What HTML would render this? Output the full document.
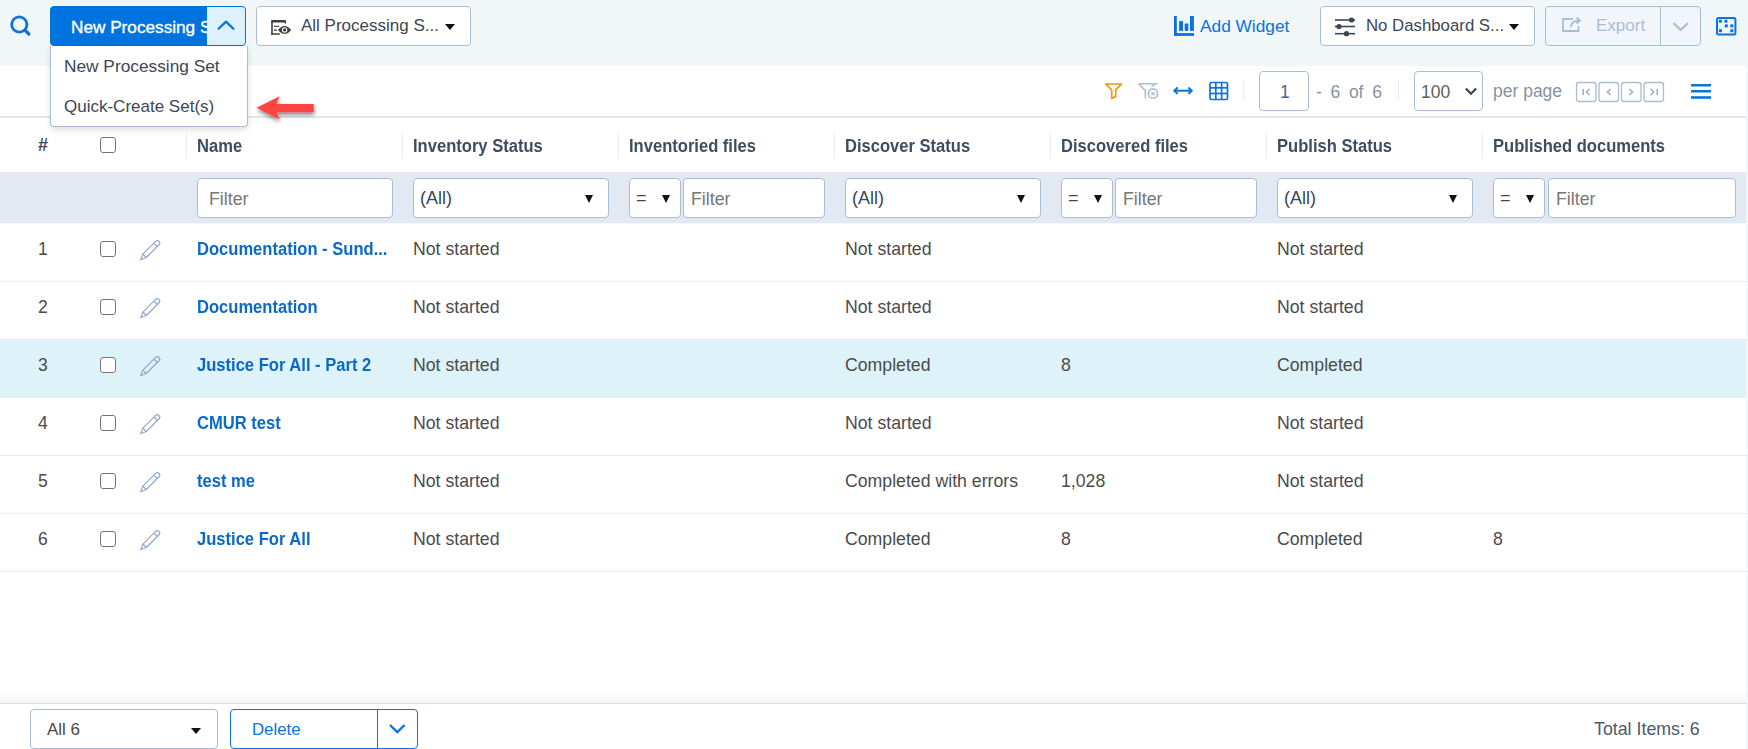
<!DOCTYPE html>
<html><head><meta charset="utf-8">
<style>
*{box-sizing:border-box;margin:0;padding:0}
html,body{width:1748px;height:749px;overflow:hidden;background:#fff;font-family:"Liberation Sans",sans-serif;color:#3d4654;position:relative}
div,span{position:absolute;white-space:nowrap}
svg{position:absolute;overflow:visible}
.t{font-size:17px;line-height:20px}
.b{border:1px solid #a9bdd6;border-radius:4px;background:#fff}
.hdr{font-weight:bold;font-size:18px;line-height:20px;color:#3e4d61;top:136px;transform:scaleX(0.92);transform-origin:0 0}
.sep{top:133px;width:1px;height:25px;background:#e6ecf2}
.inp{top:178px;height:40px;background:#fff;border:1px solid #a9bdd6;border-radius:4px}
.ph{font-size:17.8px;line-height:20px;color:#777;top:10px;left:11px}
.ph2{left:7px}
.sel{font-size:18px;line-height:20px;color:#3d4654;top:9px;left:8px}
.car{width:0;height:0;border-left:4.5px solid transparent;border-right:4.5px solid transparent;border-top:8px solid #111;top:16px}
.rb{left:0;width:1746px;height:1px;background:#e4ecf3}
.c{font-size:17.7px;line-height:20px;color:#4b4b4b}
.n{font-size:17.5px;line-height:20px;color:#4b4b4b;left:38px}
.cb{left:100px;width:16px;height:16px;border:1px solid #767676;border-radius:3px;background:#fff}
.lk{font-size:18px;font-weight:bold;line-height:20px;color:#0b6ac6;left:197px;transform:scaleX(0.92);transform-origin:0 0}
</style></head>
<body>
<!-- top bar -->
<div style="left:0;top:0;width:1748px;height:66px;background:#f1f6f9"></div>
<!-- search icon -->
<svg style="left:0;top:0" width="40" height="40"><circle cx="19.3" cy="24.5" r="7.6" fill="none" stroke="#0a73de" stroke-width="2.8"/><line x1="25" y1="30.2" x2="28.8" y2="34" stroke="#0a73de" stroke-width="3.2" stroke-linecap="round"/></svg>
<!-- New processing button -->
<div style="left:50px;top:6px;width:196px;height:40px;border-radius:4px;background:#0073de;overflow:hidden;border:1px solid #0073de">
  <div class="t" style="left:20px;top:10px;color:#fff;font-size:17.2px;-webkit-text-stroke:0.35px #fff">New Processing S</div>
  <div style="left:156px;top:0;width:39px;height:38px;background:#dcf1f9"></div>
</div>
<svg style="left:0;top:0" width="260" height="50"><polyline points="218.6,28.8 226,21.6 233.4,28.8" fill="none" stroke="#0a73de" stroke-width="2.3" stroke-linecap="round" stroke-linejoin="round"/></svg>
<!-- All processing sets -->
<div class="b" style="left:256px;top:6px;width:215px;height:40px">
  <div class="t" style="left:44px;top:9px;color:#3d4654">All Processing S...</div>
  <div class="car" style="left:188px;top:17px;border-top-color:#111;border-left-width:5px;border-right-width:5px;border-top-width:6px"></div>
</div>
<svg style="left:0;top:0" width="300" height="50"><g fill="#3f3f3f"><rect x="271.2" y="20" width="14.8" height="2.5" rx="0.9"/><rect x="284.6" y="21.5" width="1.4" height="2.1"/><rect x="271.2" y="20.6" width="1.6" height="14.2" rx="0.5"/><rect x="271.2" y="33.3" width="8.7" height="1.5" rx="0.5"/><rect x="274" y="25.8" width="5.2" height="1.1"/><rect x="274" y="29.5" width="2.8" height="1.3"/><path d="M278,29.9 Q284.6,22 291.2,29.9 Q284.6,37.8 278,29.9 Z"/></g><circle cx="284.6" cy="29.9" r="2.7" fill="#fff"/><circle cx="284.6" cy="29.9" r="1.6" fill="#3f3f3f"/></svg>
<!-- Add widget -->
<svg style="left:0;top:0" width="1200" height="50"><g fill="#0a73de"><rect x="1174" y="16" width="2.8" height="19.9"/><rect x="1174" y="33.1" width="20" height="2.8"/><rect x="1179.1" y="21.1" width="3.9" height="9.8"/><rect x="1184.7" y="23.5" width="3.6" height="7.4" rx="0.8"/><rect x="1190" y="16" width="3.9" height="14.9"/></g></svg>
<div class="t" style="left:1200px;top:16px;color:#0a73de;font-size:17.3px">Add Widget</div>
<!-- No dashboard -->
<div class="b" style="left:1320px;top:6px;width:215px;height:40px">
  <div class="t" style="left:45px;top:9px;color:#3d4654;font-size:16.8px">No Dashboard S...</div>
  <div class="car" style="left:188px;top:17px;border-top-color:#111;border-left-width:5px;border-right-width:5px;border-top-width:6px"></div>
</div>
<svg style="left:0;top:0" width="1400" height="50"><g stroke="#3d4654" stroke-width="1.6"><line x1="1335" y1="20" x2="1355" y2="20"/><line x1="1335" y1="26.5" x2="1355" y2="26.5"/><line x1="1335" y1="33.7" x2="1355" y2="33.7"/></g><g fill="#3d4654"><circle cx="1351.5" cy="20" r="2.6"/><circle cx="1339" cy="26.5" r="2.6"/><circle cx="1346.5" cy="33.7" r="2.6"/></g></svg>
<!-- Export -->
<div style="left:1545px;top:6px;width:156px;height:40px;border:1px solid #a9bdd6;border-radius:4px;background:#f2f6fa">
  <div style="left:114px;top:0;width:1px;height:38px;background:#a9bdd6"></div>
  <div class="t" style="left:50px;top:9px;color:#a9bdd6">Export</div>
</div>
<svg style="left:0;top:0" width="1748" height="50"><g fill="none" stroke="#a9bdd6" stroke-width="1.8"><path d="M1573,19 H1563 V31 H1578.5 V26"/><path d="M1571,27 Q1571,21 1579,20.5"/><path d="M1576.5,17.5 L1580,20.5 L1576.5,23.5"/></g><polyline points="1673.5,23 1680.7,30 1688,23" fill="none" stroke="#a9bdd6" stroke-width="2.2"/>
<g><rect x="1717" y="18" width="18.4" height="16.4" rx="1.5" fill="none" stroke="#0a73de" stroke-width="2"/><g fill="#0a73de"><rect x="1718.9" y="19.7" width="3" height="3"/><rect x="1724.4" y="19.7" width="3" height="3"/><rect x="1724.8" y="24.4" width="3" height="3"/><rect x="1730.3" y="24.4" width="3" height="3"/><rect x="1718.9" y="29.2" width="3" height="3"/><rect x="1730.3" y="29.2" width="3" height="3"/></g></g></svg>

<!-- toolbar 2 -->
<div style="left:0;top:116px;width:1746px;height:2px;background:#dfe7f0"></div>
<div style="left:1746px;top:66px;width:2px;height:683px;background:#f1f6f9"></div>
<svg style="left:0;top:0" width="1748" height="120">
<path d="M1105.6,84 H1121.4 L1115.7,89.8 V96.4 L1111.7,98.4 V89.8 Z" fill="none" stroke="#f5920f" stroke-width="1.7" stroke-linejoin="round"/>
<g fill="none" stroke="#adc0d9" stroke-width="1.6"><path d="M1138.6,83.7 H1156 L1151.3,86.6"/><path d="M1138.6,83.7 L1145.3,90.6 V98.4"/><rect x="1148.6" y="89.2" width="8.8" height="8.8" rx="3.6" stroke-width="1.7"/></g><path d="M1151.4,92.2 L1154.7,95.4 M1154.7,92.2 L1151.4,95.4" stroke="#adc0d9" stroke-width="1.3"/>
<g fill="none" stroke="#0a73de" stroke-width="2"><line x1="1175" y1="90.7" x2="1191" y2="90.7"/><polyline points="1177.6,87.5 1174.3,90.7 1177.6,93.9"/><polyline points="1188.4,87.5 1191.7,90.7 1188.4,93.9"/></g>
<g fill="none" stroke="#0a73de" stroke-width="1.7"><rect x="1210" y="82.5" width="17.5" height="17" rx="1.5"/><line x1="1215.8" y1="82.5" x2="1215.8" y2="99.5"/><line x1="1221.6" y1="82.5" x2="1221.6" y2="99.5"/><line x1="1210" y1="87.8" x2="1227.5" y2="87.8"/><line x1="1210" y1="93.5" x2="1227.5" y2="93.5"/></g>
<line x1="1243.5" y1="80" x2="1243.5" y2="100.5" stroke="#e6ecf2" stroke-width="1"/>
<line x1="1398.5" y1="80" x2="1398.5" y2="100.5" stroke="#e6ecf2" stroke-width="1"/>
<polyline points="1465.8,88.5 1471,93.7 1476.2,88.5" fill="none" stroke="#3a4350" stroke-width="2.2"/>
<g fill="none" stroke="#a9bdd6" stroke-width="1.3"><rect x="1576.5" y="82.5" width="19.5" height="19" rx="2.5"/><rect x="1599" y="82.5" width="19.5" height="19" rx="2.5"/><rect x="1621.5" y="82.5" width="19.5" height="19" rx="2.5"/><rect x="1644" y="82.5" width="19.5" height="19" rx="2.5"/></g>
<g fill="none" stroke="#98aac4" stroke-width="1.4"><line x1="1583.3" y1="88.8" x2="1583.3" y2="95"/><polyline points="1589.6,88.8 1586.4,91.9 1589.6,95"/><polyline points="1610.6,88.8 1607.4,91.9 1610.6,95"/><polyline points="1629.4,88.8 1632.6,91.9 1629.4,95"/><polyline points="1650.6,88.8 1653.8,91.9 1650.6,95"/><line x1="1657.2" y1="88.8" x2="1657.2" y2="95"/></g>
<g fill="#0a73de"><rect x="1691" y="84" width="20" height="2.5"/><rect x="1691" y="90" width="20" height="2.5"/><rect x="1691" y="96.2" width="20" height="2.6"/></g>
</svg>
<div style="left:1259px;top:71px;width:50px;height:40px;border:1px solid #a9bdd6;border-radius:4px"></div>
<div class="t" style="left:1280px;top:82px;color:#4a6294;font-size:17.5px">1</div>
<div class="t" style="left:1316px;top:82px;color:#8792a5;font-size:17.5px;word-spacing:3.8px">- 6 of 6</div>
<div style="left:1414px;top:71px;width:69px;height:40px;border:1px solid #a9bdd6;border-radius:4px"></div>
<div class="t" style="left:1421px;top:82px;color:#606060;font-size:17.5px">100</div>
<div class="t" style="left:1493px;top:81px;color:#8792a5;font-size:17.5px">per page</div>

<!-- header -->
<div class="hdr" style="left:38px;font-size:18px;transform:none;top:135px">#</div>
<div class="cb" style="top:137px"></div>
<div class="sep" style="left:186px"></div>
<div class="hdr" style="left:197px">Name</div>
<div class="sep" style="left:402px"></div>
<div class="hdr" style="left:413px">Inventory Status</div>
<div class="sep" style="left:618px"></div>
<div class="hdr" style="left:629px">Inventoried files</div>
<div class="sep" style="left:834px"></div>
<div class="hdr" style="left:845px">Discover Status</div>
<div class="sep" style="left:1050px"></div>
<div class="hdr" style="left:1061px">Discovered files</div>
<div class="sep" style="left:1266px"></div>
<div class="hdr" style="left:1277px">Publish Status</div>
<div class="sep" style="left:1482px"></div>
<div class="hdr" style="left:1493px">Published documents</div>

<!-- filter row -->
<div style="left:0;top:172px;width:1746px;height:51px;background:#e2e9f3"></div><div style="left:0;top:223px;width:1746px;height:1px;background:#f3f6fa"></div>
<div class="inp" style="left:197px;width:196px"><div class="ph">Filter</div></div>
<div class="inp" style="left:413px;width:196px"><div class="sel" style="left:6px">(All)</div><div class="car" style="left:171px"></div></div>
<div class="inp" style="left:629px;width:52px"><div class="sel" style="left:6px">=</div><div class="car" style="left:32px"></div></div>
<div class="inp" style="left:683px;width:142px"><div class="ph ph2">Filter</div></div>
<div class="inp" style="left:845px;width:196px"><div class="sel" style="left:6px">(All)</div><div class="car" style="left:171px"></div></div>
<div class="inp" style="left:1061px;width:52px"><div class="sel" style="left:6px">=</div><div class="car" style="left:32px"></div></div>
<div class="inp" style="left:1115px;width:142px"><div class="ph ph2">Filter</div></div>
<div class="inp" style="left:1277px;width:196px"><div class="sel" style="left:6px">(All)</div><div class="car" style="left:171px"></div></div>
<div class="inp" style="left:1493px;width:52px"><div class="sel" style="left:6px">=</div><div class="car" style="left:32px"></div></div>
<div class="inp" style="left:1548px;width:188px"><div class="ph ph2">Filter</div></div>

<!-- rows -->
<div style="left:0;top:339px;width:1746px;height:58px;background:#ddf2f9"></div>
<div class="rb" style="top:281px"></div>
<div class="rb" style="top:339px"></div>
<div class="rb" style="top:397px"></div>
<div class="rb" style="top:455px"></div>
<div class="rb" style="top:513px"></div>
<div class="rb" style="top:571px"></div>

<div class="n" style="top:239px">1</div><div class="cb" style="top:241px"></div>
<div class="lk" style="top:239px">Documentation - Sund...</div>
<div class="c" style="left:413px;top:239px">Not started</div><div class="c" style="left:845px;top:239px">Not started</div><div class="c" style="left:1277px;top:239px">Not started</div>

<div class="n" style="top:297px">2</div><div class="cb" style="top:299px"></div>
<div class="lk" style="top:297px">Documentation</div>
<div class="c" style="left:413px;top:297px">Not started</div><div class="c" style="left:845px;top:297px">Not started</div><div class="c" style="left:1277px;top:297px">Not started</div>

<div class="n" style="top:355px">3</div><div class="cb" style="top:357px"></div>
<div class="lk" style="top:355px">Justice For All - Part 2</div>
<div class="c" style="left:413px;top:355px">Not started</div><div class="c" style="left:845px;top:355px">Completed</div><div class="c" style="left:1061px;top:355px">8</div><div class="c" style="left:1277px;top:355px">Completed</div>

<div class="n" style="top:413px">4</div><div class="cb" style="top:415px"></div>
<div class="lk" style="top:413px">CMUR test</div>
<div class="c" style="left:413px;top:413px">Not started</div><div class="c" style="left:845px;top:413px">Not started</div><div class="c" style="left:1277px;top:413px">Not started</div>

<div class="n" style="top:471px">5</div><div class="cb" style="top:473px"></div>
<div class="lk" style="top:471px">test me</div>
<div class="c" style="left:413px;top:471px">Not started</div><div class="c" style="left:845px;top:471px">Completed with errors</div><div class="c" style="left:1061px;top:471px">1,028</div><div class="c" style="left:1277px;top:471px">Not started</div>

<div class="n" style="top:529px">6</div><div class="cb" style="top:531px"></div>
<div class="lk" style="top:529px">Justice For All</div>
<div class="c" style="left:413px;top:529px">Not started</div><div class="c" style="left:845px;top:529px">Completed</div><div class="c" style="left:1061px;top:529px">8</div><div class="c" style="left:1277px;top:529px">Completed</div><div class="c" style="left:1493px;top:529px">8</div>

<svg style="left:0;top:0" width="200" height="600"><defs><g id="pen" fill="none" stroke="#8fa8c8" stroke-width="1.2" stroke-linejoin="round" transform="translate(140.7,259.7) rotate(-45)"><path d="M0,0 L5.5,-2.4 H23.5 A2.4,2.4 0 0 1 23.5,2.4 H5.5 Z"/><line x1="5.5" y1="-2.4" x2="5.5" y2="2.4"/><line x1="21" y1="-2.4" x2="21" y2="2.4"/></g></defs>
<use href="#pen"/><use href="#pen" y="58"/><use href="#pen" y="116"/><use href="#pen" y="174"/><use href="#pen" y="232"/><use href="#pen" y="290"/></svg>

<!-- footer -->
<div style="left:0;top:690px;width:1746px;height:13px;background:linear-gradient(#fff,#f4f5f6)"></div>
<div style="left:0;top:703px;width:1746px;height:1px;background:#d5dfea"></div>
<div class="b" style="left:30px;top:709px;width:188px;height:40px">
  <div class="t" style="left:16px;top:10px;color:#4a4a4a">All 6</div>
  <div class="car" style="left:160px;top:18px;border-top-color:#111;border-left-width:5px;border-right-width:5px;border-top-width:6px"></div>
</div>
<div style="left:230px;top:709px;width:188px;height:40px;border:1px solid #0a73de;border-radius:4px;background:#fff">
  <div style="left:146px;top:0;width:1px;height:40px;background:#0a73de"></div>
  <div class="t" style="left:21px;top:10px;color:#0a73de;font-size:16.8px">Delete</div>
</div>
<svg style="left:0;top:0" width="500" height="749"><polyline points="390,725 397.3,732 404.6,725" fill="none" stroke="#0a73de" stroke-width="2.4"/></svg>
<div class="t" style="left:1594px;top:719px;color:#4d5a6a;font-size:17.8px">Total Items: 6</div>

<!-- dropdown menu -->
<div style="left:50px;top:46px;width:198px;height:81px;background:#fff;border:1px solid #a9bdd6;border-top:none;border-radius:0 0 4px 4px;box-shadow:0 3px 6px rgba(0,0,0,0.12)">
  <div class="t" style="left:13px;top:10px;color:#3d4654;font-size:17.3px">New Processing Set</div>
  <div class="t" style="left:13px;top:51px;color:#3d4654">Quick-Create Set(s)</div>
</div>
<!-- red arrow -->
<svg style="left:0;top:0" width="330" height="130"><defs><filter id="sh" x="-20%" y="-50%" width="140%" height="200%"><feDropShadow dx="0.5" dy="2.5" stdDeviation="2" flood-color="#000" flood-opacity="0.5"/></filter></defs>
<path d="M256.5,107.7 L279.7,96.2 L276.3,103.9 H313.7 V112.2 H276.3 L279.7,119.6 Z" fill="#ff4242" filter="url(#sh)"/></svg>
</body></html>
